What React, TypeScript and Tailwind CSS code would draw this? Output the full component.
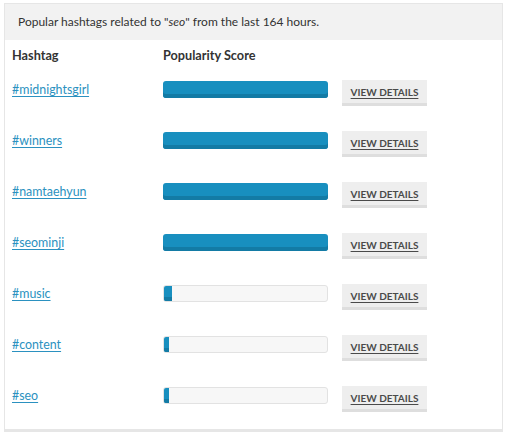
import React from "react";

const rows = [
  { tag: "#midnightsgirl", score: 100 },
  { tag: "#winners", score: 100 },
  { tag: "#namtaehyun", score: 100 },
  { tag: "#seominji", score: 100 },
  { tag: "#music", score: 5 },
  { tag: "#content", score: 3 },
  { tag: "#seo", score: 3 },
];

export default function App() {
  return (
    <div className="w-[507px] h-[440px] bg-white pt-[3px] pl-[4px] font-['Lato',sans-serif]">
      <div className="w-[499px] border border-[#e6e6e6] border-b-[3px] bg-white">
        <div className="h-[36px] bg-[#f2f2f2] flex items-center pl-[13px] text-[12px] text-[#333]">
          Popular hashtags related to "<i>seo</i>" from the last 164 hours.
        </div>
        <div className="pl-[7px]">
          <div className="flex h-[38px] pt-[7px] leading-[16px] text-[12.7px] font-bold text-[#333]">
            <div className="w-[151px]">Hashtag</div>
            <div>Popularity Score</div>
          </div>
          {rows.map((r, i) => (
            <div key={i} className="flex items-start h-[51px] last:h-[45px] pt-[2px]">
              <div className="w-[151px] leading-[15px]">
                <a href="#" className="text-[12.4px] text-[#2b91c0] underline underline-offset-2">
                  {r.tag}
                </a>
              </div>
              {r.score === 100 ? (
                <div className="mt-[1px] w-[165px] h-[17px] rounded-[3px] bg-[#188fbf] shadow-[inset_0_-4px_0_#137ba5]" />
              ) : (
                <div className="mt-[1px] w-[165px] h-[17px] rounded-[3px] bg-[#f7f7f7] border border-[#e2e2e2] overflow-hidden">
                  <div
                    className="h-full bg-[#188fbf] shadow-[inset_0_-4px_0_#137ba5]"
                    style={{ width: r.score === 5 ? 8 : 5 }}
                  />
                </div>
              )}
              <button className="ml-[14px] w-[85px] h-[26px] bg-[#eeeeee] border-b-[3px] border-[#dedede] text-[10px] font-bold text-[#4a4a4a] underline underline-offset-2 flex items-center justify-center pt-[2px]">
                VIEW DETAILS
              </button>
            </div>
          ))}
        </div>
      </div>
    </div>
  );
}
